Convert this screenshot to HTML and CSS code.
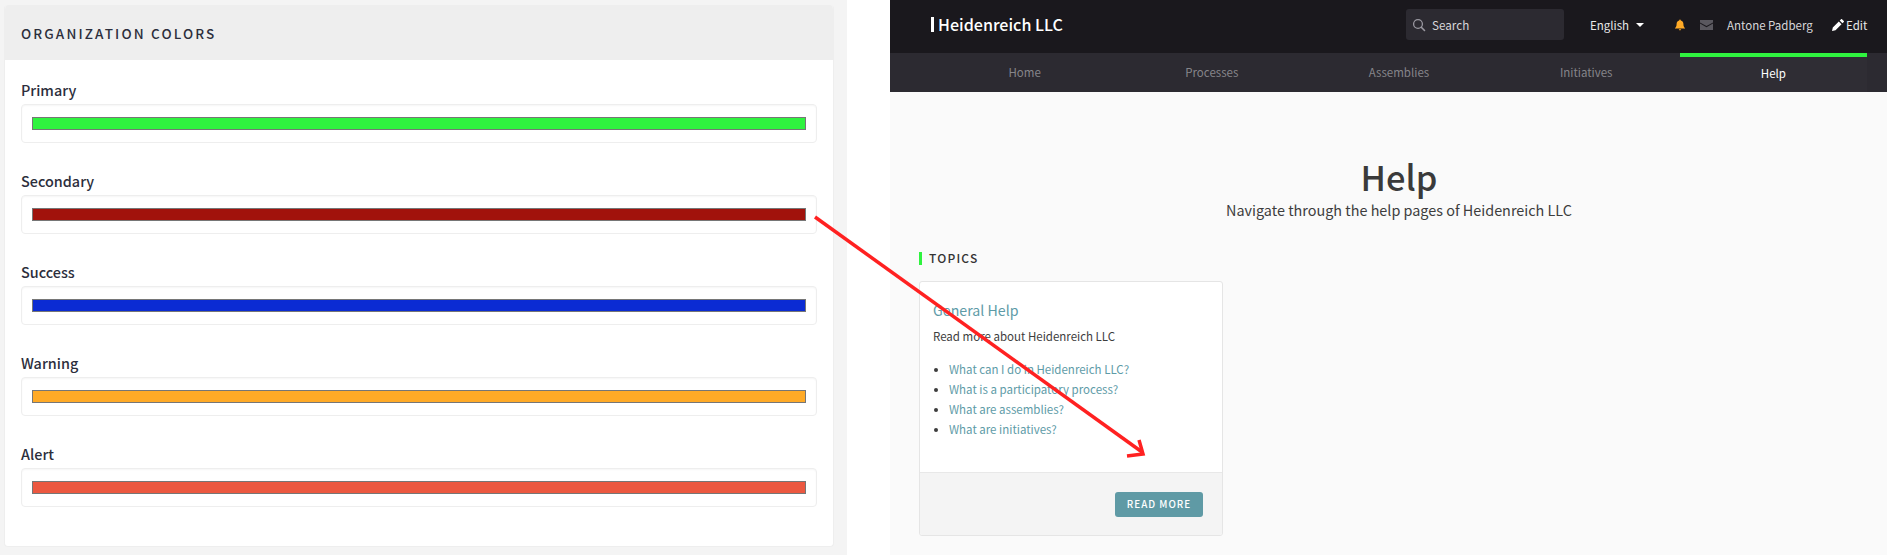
FILE: index.html
```html
<!DOCTYPE html>
<html lang="en">
<head>
<meta charset="utf-8">
<title>Organization colors and Help page</title>
<link rel="stylesheet" href="styles.css">
</head>
<body>
<div class="shot">
  <section class="admin">
    <div class="card">
      <h2 class="card-title">ORGANIZATION COLORS</h2>
      <div class="card-body">
        <div class="field"><label class="field-label">Primary</label><div class="swatch-box"><div class="swatch swatch-primary"></div></div></div>
        <div class="field"><label class="field-label">Secondary</label><div class="swatch-box"><div class="swatch swatch-secondary"></div></div></div>
        <div class="field"><label class="field-label">Success</label><div class="swatch-box"><div class="swatch swatch-success"></div></div></div>
        <div class="field"><label class="field-label">Warning</label><div class="swatch-box"><div class="swatch swatch-warning"></div></div></div>
        <div class="field"><label class="field-label">Alert</label><div class="swatch-box"><div class="swatch swatch-alert"></div></div></div>
      </div>
    </div>
  </section>
  <section class="site">
    <header class="topbar">
      <div class="logo">Heidenreich LLC</div>
      <div class="search">
        <svg class="search-icon" viewBox="0 0 14 14" width="14" height="14"><circle cx="6" cy="6" r="4.400" fill="none" stroke="#9a98a0" stroke-width="1.300"/><path d="M9.300 9.300l3.200 3.200" stroke="#9a98a0" stroke-width="1.600" stroke-linecap="round"/></svg>
        <span>Search</span>
      </div>
      <div class="lang">English<span class="caret"></span></div>
      <svg class="bell" viewBox="0 0 12 12" width="12" height="12"><path d="M6 .6c.5 0 .8.3.8.8 1.700.4 2.600 1.700 2.600 3.500 0 2.300.7 3.200 1.600 4.100v.6H1v-.6c.9-.9 1.600-1.800 1.600-4.100 0-1.800.9-3.100 2.600-3.500 0-.5.3-.8.8-.8z" fill="#ffaa26"/><path d="M4.900 10.200h2.200c0 .7-.5 1.200-1.100 1.200s-1.100-.5-1.100-1.200z" fill="#ffaa26"/></svg>
      <svg class="mail" viewBox="0 0 13 10" width="13" height="10"><path d="M0 0h13v2.400L6.500 6 0 2.400z" fill="#5a585f"/><path d="M0 3.600 6.500 7.200 13 3.600V10H0z" fill="#5a585f"/></svg>
      <div class="user">Antone Padberg</div>
      <div class="edit">
        <svg viewBox="0 0 12 12" width="12" height="12"><path d="M0 12l.8-3.500 6-6 2.700 2.700-6 6zM7.700 1.600 9.100.2c.3-.3.600-.3.900 0l1.800 1.800c.3.300.3.600 0 .9l-1.400 1.400z" fill="#fff"/></svg>
        <span>Edit</span>
      </div>
    </header>
    <nav class="tabs">
      <a class="tab">Home</a>
      <a class="tab">Processes</a>
      <a class="tab">Assemblies</a>
      <a class="tab">Initiatives</a>
      <a class="tab tab-active">Help</a>
    </nav>
    <main class="content">
      <h1 class="page-title">Help</h1>
      <p class="page-sub">Navigate through the help pages of Heidenreich LLC</p>
      <h3 class="section-title">TOPICS</h3>
      <article class="topic">
        <div class="topic-body">
          <h4 class="topic-title">General Help</h4>
          <p class="topic-text">Read more about Heidenreich LLC</p>
          <ul class="topic-list">
            <li><a>What can I do in Heidenreich LLC?</a></li>
            <li><a>What is a participatory process?</a></li>
            <li><a>What are assemblies?</a></li>
            <li><a>What are initiatives?</a></li>
          </ul>
        </div>
        <div class="topic-foot"><a class="btn">READ MORE</a></div>
      </article>
    </main>
  </section>
  <svg class="arrow" viewBox="0 0 1887 555" width="1887" height="555">
    <path d="M815 217L1142 452" fill="none" stroke="#ff2121" stroke-width="3.500"/>
    <path d="M1139 440L1143 454L1127 456" fill="none" stroke="#ff2121" stroke-width="3.500"/>
  </svg>
</div>
</body>
</html>
```
FILE: styles.css
```css
* { box-sizing: border-box; }
html, body { margin: 0; padding: 0; }
body {
  width: 1887px;
  height: 555px;
  overflow: hidden;
  background: #fff;
  font-family: "Noto Sans CJK SC", "Noto Sans", sans-serif;
  font-size: 11.500px;
  line-height: 20px;
}
.shot { position: relative; display: flex; justify-content: space-between; width: 1887px; height: 555px; }
h1, h2, h3, h4, p, ul { margin: 0; padding: 0; }

/* admin panel */
.admin { width: 847px; height: 555px; background: #f4f4f4; padding: 5px 13px 0 4px; }
.card { height: 542px; background: #fff; border-radius: 4px; overflow: hidden; border: 1px solid #eeeeee; border-top: 0; }
.card-title {
  height: 55px;
  margin: 0 -1px;
  padding: 0 0 0 17px;
  background: #eeeeee;
  color: #2c2e3c;
  font-size: 13.500px;
  font-weight: 500;
  letter-spacing: 2.150px;
  line-height: 57px;
}
.card-body { padding: 21px 16px 0; }
.field { height: 91px; }
.field-label { display: block; height: 23px; color: #2c2e3c; font-size: 14.400px; font-weight: 500; line-height: 17px; }
.swatch-box { height: 39px; border: 1px solid #eeeeee; box-shadow: inset 0 1px 2px rgba(10,10,10,.04); border-radius: 4px; padding: 12px 10px; }
.swatch { height: 13px; border: 1px solid #767676; }
.swatch-primary { background: #2ff33f; }
.swatch-secondary { background: #a1120c; }
.swatch-success { background: #0b2bd3; }
.swatch-warning { background: #ffaa26; }
.swatch-alert { background: #ec5840; }

/* site */
.site { width: 997px; height: 555px; background: #fafafa; }
.topbar { height: 53px; background: #1a181d; color: #fff; display: flex; align-items: center; padding: 0 20px 4px 41px; }
.logo { border-left: 3px solid #fff; height: 15px; line-height: 14px; padding-left: 4px; font-size: 16.100px; font-weight: 500; width: 475px; flex: none; white-space: nowrap; }
.search { width: 158px; height: 31px; flex: none; background: #2c2a31; border-radius: 3px; display: flex; align-items: center; padding-left: 6px; gap: 6px; color: #d8d7da; font-size: 11.700px; }
.search-icon { flex: none; }
.lang { margin-left: 26px; width: 84px; flex: none; color: #e8e8e8; font-size: 11.500px; display: flex; align-items: center; }
.caret { width: 0; height: 0; margin-left: 7px; border: 4px solid transparent; border-top-color: #fff; border-bottom-width: 0; }
.bell { flex: none; margin-right: 14px; }
.mail { flex: none; margin-right: 14px; }
.user { color: #d8d7da; font-size: 11.500px; width: 105px; flex: none; white-space: nowrap; }
.edit { display: flex; align-items: center; gap: 2px; color: #e8e8e8; font-size: 11.500px; }

.tabs { height: 39px; background: #2c2a31; display: flex; padding: 0 20px 0 41px; }
.tab { flex: 0 0 187.200px; text-align: center; color: #86858a; font-size: 11.500px; line-height: 38px; border-top: 0 solid transparent; }
.tab-active { background: #2f2d34; color: #fff; border-top: 4px solid #2ff33f; line-height: 29px; padding-top: 2px; }

.content { padding: 61px 8px 0 29px; color: #3d3d3d; }
.page-title { text-align: center; font-size: 34.400px; font-weight: 500; line-height: 46px; color: #3a3a3a; }
.page-sub { text-align: center; font-size: 14.400px; line-height: 21px; }
.section-title { margin-top: 32px; height: 13px; border-left: 3px solid #2ff33f; padding-left: 7px; font-size: 12px; font-weight: 500; letter-spacing: 1.200px; line-height: 12px; color: #333; }
.topic { margin-top: 16px; width: 304px; height: 255px; border: 1px solid #e5e5e5; border-radius: 3px; background: #fff; overflow: hidden; }
.topic-body { height: 191px; padding: 16px 13px 0; border-bottom: 1px solid #e8e8e8; }
.topic-title { font-size: 14.200px; font-weight: 400; line-height: 24px; color: #5e9ba7; }
.topic-text { margin-top: 4px; font-size: 11.500px; line-height: 20px; color: #3d3d3d; }
.topic-list { margin-top: 13px; padding-left: 16px; }
.topic-list li { line-height: 20px; color: #3d3d3d; }
.topic-list a { color: #5e9ba7; }
.topic-foot { height: 63px; background: #f4f4f4; display: flex; justify-content: flex-end; align-items: flex-start; padding: 19px 19px 0 0; }
.btn { width: 88px; height: 25px; border-radius: 3px; background: #5f9aa5; color: #fff; text-align: center; font-size: 9.800px; font-weight: 500; letter-spacing: 1px; line-height: 25px; }

.arrow { position: absolute; left: 0; top: 0; pointer-events: none; }
```
